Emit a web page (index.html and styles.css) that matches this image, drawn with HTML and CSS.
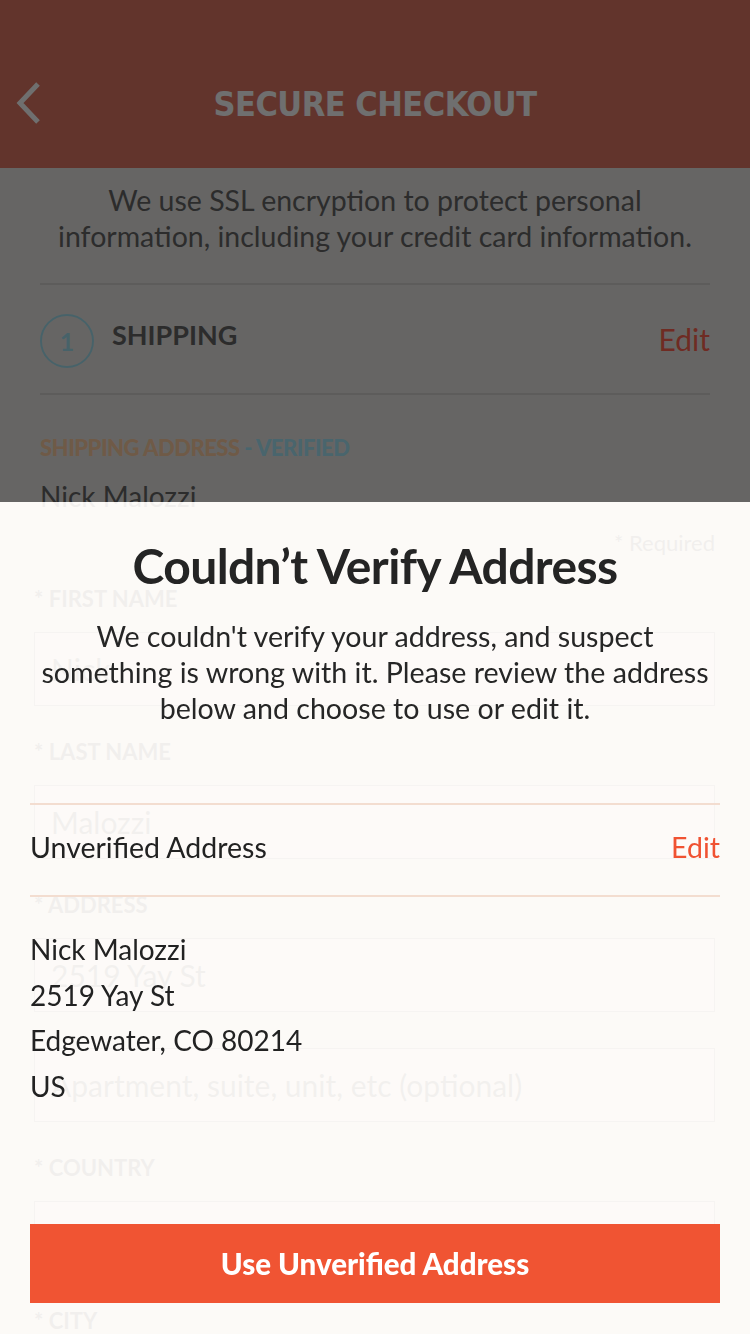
FILE: index.html
```html
<!DOCTYPE html>
<html lang="en">
<head>
<meta charset="utf-8">
<title>Secure Checkout</title>
<link rel="stylesheet" href="styles.css">
</head>
<body>
<div class="page">
  <header class="topbar">
    <button class="back" aria-label="Back">
      <svg width="30" height="44" viewBox="0 0 30 44"><polyline points="24,3 6,22 24,41" fill="none" stroke="currentColor" stroke-width="5"/></svg>
    </button>
    <h1 class="topbar-title">SECURE CHECKOUT</h1>
  </header>

  <p class="intro">We use SSL encryption to protect personal information, including your credit card information.</p>

  <section class="step">
    <span class="step-num">1</span>
    <span class="step-title">SHIPPING</span>
    <a class="step-edit">Edit</a>
  </section>

  <section class="summary">
    <h2 class="summary-label"><span class="tan">SHIPPING ADDRESS</span><span class="teal"> - VERIFIED</span></h2>
    <p class="summary-line">Nick Malozzi</p>
  </section>

  <form class="form">
    <div class="required">* Required</div>
    <div class="field">
      <div class="label">* FIRST NAME</div>
      <div class="input">Nick</div>
    </div>
    <div class="field">
      <div class="label">* LAST NAME</div>
      <div class="input">Malozzi</div>
    </div>
    <div class="field">
      <div class="label">* ADDRESS</div>
      <div class="input">2519 Yay St</div>
      <div class="input input-extra">Apartment, suite, unit, etc (optional)</div>
    </div>
    <div class="field">
      <div class="label">* COUNTRY</div>
      <div class="input"></div>
    </div>
    <div class="field">
      <div class="label">* CITY</div>
      <div class="input"></div>
    </div>
  </form>
</div>

<div class="modal">
  <div class="scrim"></div>
  <div class="sheet">
    <h2 class="sheet-title">Couldn’t Verify Address</h2>
    <p class="sheet-text">We couldn't verify your address, and suspect something is wrong with it. Please review the address below and choose to use or edit it.</p>
    <div class="addr-head">
      <span>Unverified Address</span>
      <a class="addr-edit">Edit</a>
    </div>
    <div class="addr">
      <div>Nick Malozzi</div>
      <div>2519 Yay St</div>
      <div>Edgewater, CO 80214</div>
      <div>US</div>
    </div>
    <button class="use-btn">Use Unverified Address</button>
  </div>
</div>
</body>
</html>
```
FILE: styles.css
```css
* { box-sizing: border-box; }
html, body { margin: 0; padding: 0; }
body {
  width: 750px;
  height: 1334px;
  overflow: hidden;
  background: #ebe9e6;
  font-family: Lato, "Liberation Sans", sans-serif;
  color: #666;
}

.page { display: flex; flex-direction: column; }

.topbar {
  height: 168px;
  flex: none;
  background: #e17865;
  display: flex;
  align-items: center;
  justify-content: center;
  position: relative;
  padding-top: 40px;
}
.back {
  position: absolute;
  left: 14px;
  top: 81px;
  border: 0;
  background: none;
  padding: 0;
  color: #fff;
  display: flex;
}
.topbar-title {
  margin: 0;
  font-family: "DejaVu Sans Condensed", "DejaVu Sans", sans-serif;
  font-stretch: condensed;
  font-weight: 700;
  font-size: 34px;
  letter-spacing: -0.5px;
  color: #fff;
}

.intro {
  margin: 0 40px;
  padding: 14px 0 29px;
  text-align: center;
  font-size: 28.5px;
  line-height: 36px;
  color: #666;
  border-bottom: 2px solid #d6d4d1;
}

.step {
  margin: 0 40px;
  height: 110px;
  display: flex;
  align-items: center;
  border-bottom: 2px solid #d6d4d1;
}
.step-num {
  width: 54px;
  height: 54px;
  border: 2px solid #a4e2f2;
  border-radius: 50%;
  display: flex;
  align-items: center;
  justify-content: center;
  color: #a4e2f2;
  font-weight: 700;
  font-size: 25px;
  margin-top: 4px;
}
.step-title {
  margin-left: 18px;
  font-weight: 700;
  font-size: 27px;
  color: #666;
  margin-bottom: 10px;
}
.step-edit {
  margin-left: auto;
  color: #ff6450;
  font-size: 30px;
}

.summary { margin: 0 40px; padding-top: 41px; }
.summary-label {
  margin: 0;
  font-size: 22px;
  font-weight: 900;
  letter-spacing: -0.5px;
  line-height: 24px;
}
.tan { color: #ffcfa3; }
.teal { color: #a8e8fa; }
.summary-line {
  margin: 19px 0 0;
  font-size: 28px;
  line-height: 34px;
  color: #666;
}

.form { padding: 17px 35px 0 34px; display: flex; flex-direction: column; }
.required { text-align: right; font-size: 22px; line-height: 26px; color: #666; margin-bottom: 30px; }
.field { display: flex; flex-direction: column; margin-bottom: 33px; }
.label { font-size: 22px; line-height: 26px; font-weight: 700; color: #666; margin-bottom: 20px; }
.input {
  height: 74px;
  border: 1px solid #aaa;
  background: #f4f2ef;
  padding: 0 16px;
  display: flex;
  align-items: center;
  font-size: 30px;
  color: #777;
}
.input-extra { margin-top: 36px; }

.modal {
  position: fixed;
  inset: 0;
  display: flex;
  flex-direction: column;
}
.scrim { height: 502px; flex: none; background: rgba(0, 0, 0, 0.565); }
.sheet {
  flex: 1;
  display: flex;
  flex-direction: column;
  padding: 0 30px 31px;
  background: rgba(253, 251, 248, 0.92);
  color: #222;
}
.sheet-title {
  margin: 36px 0 0;
  text-align: center;
  font-size: 48px;
  line-height: 56px;
  font-weight: 700;
  letter-spacing: -0.6px;
  color: #242424;
}
.sheet-text {
  margin: 24px 10px 0;
  text-align: center;
  font-size: 28.6px;
  line-height: 36px;
  color: #262626;
}
.addr-head {
  margin-top: 77px;
  border-top: 2px solid #f3ddd0;
  border-bottom: 2px solid #f3ddd0;
  height: 94px;
  padding-top: 24px;
  display: flex;
  align-items: flex-start;
  justify-content: space-between;
  font-size: 28.5px;
  line-height: 36px;
  color: #222;
}
.addr-edit { color: #f05232; }
.addr {
  margin-top: 30px;
  font-size: 28px;
  line-height: 45.5px;
  color: #222;
}
.use-btn {
  margin-top: auto;
  height: 79px;
  border: 0;
  background: #f05433;
  color: #fff;
  font-family: Lato, sans-serif;
  font-weight: 900;
  font-size: 29.5px;
}
```
